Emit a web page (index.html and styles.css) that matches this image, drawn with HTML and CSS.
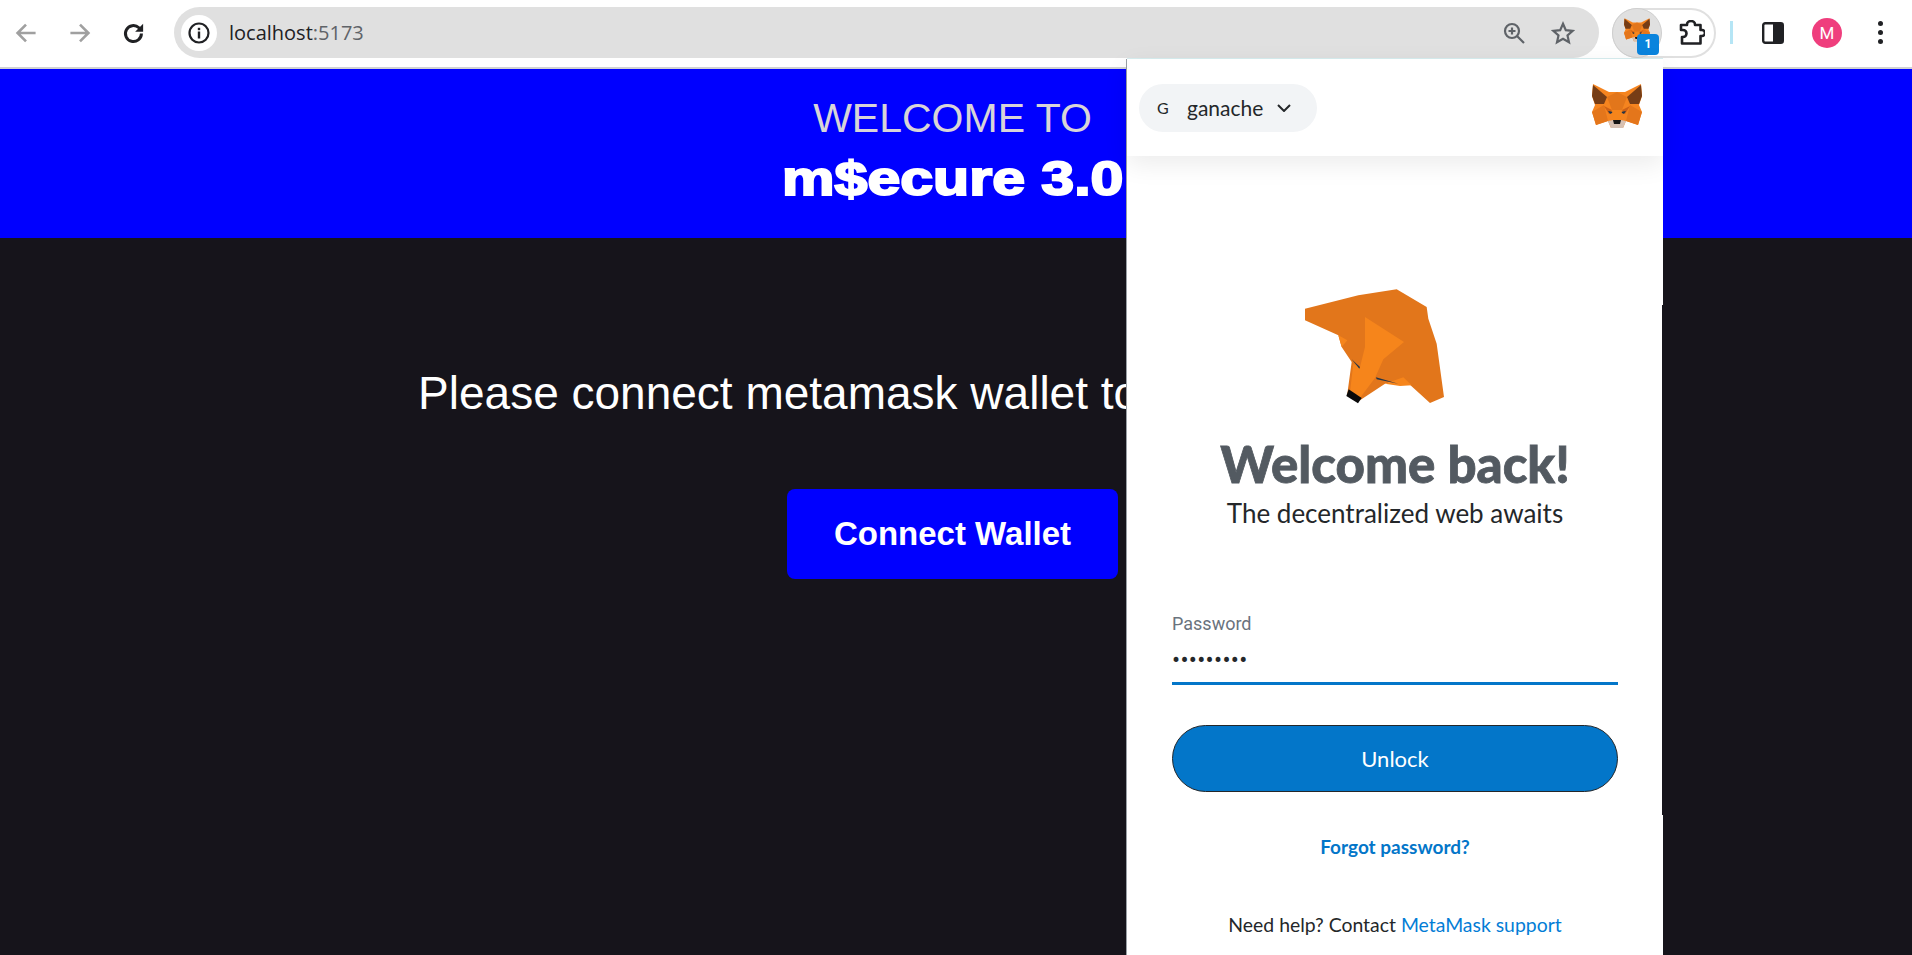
FILE: index.html
```html
<!DOCTYPE html>
<html lang="en">
<head>
<meta charset="utf-8">
<title>m$ecure 3.0</title>
<link rel="stylesheet" href="styles.css">
</head>
<body>
<svg class="defs" width="0" height="0" aria-hidden="true">
  <symbol id="fox" viewBox="0 0 50 45">
    <polygon fill="#f5841f" points="1,0 17,8 33,8 49,0 50,12 47,21 50,28 46,41 34,37 31,44 19,44 16,37 4,41 0,28 3,21 0,12"/>
    <polygon fill="#e2761b" points="15,13 25,8 35,13 30,26 20,26"/>
    <polygon fill="#763d16" points="1,1 15,13 12,20 3,20 0,12"/>
    <polygon fill="#763d16" points="49,1 35,13 38,20 47,20 50,12"/>
    <polygon fill="#e4761b" points="0,28 12,21 16,37 4,41"/>
    <polygon fill="#e4761b" points="50,28 38,21 34,37 46,41"/>
    <polygon fill="#cd6116" points="12,22 20,26 17,30"/>
    <polygon fill="#cd6116" points="38,22 30,26 33,30"/>
    <polygon fill="#233447" points="16,27 22,28 18,30"/>
    <polygon fill="#233447" points="34,27 28,28 32,30"/>
    <polygon fill="#f6851b" points="20,26 30,26 29,36 21,36"/>
    <polygon fill="#d7c1b3" points="16,37 21,36 29,36 34,37 31,44 19,44"/>
    <polygon fill="#161616" points="21,36 29,36 28,40 22,40"/>
  </symbol>
</svg>

<header class="toolbar">
  <svg class="nav-icon" viewBox="0 0 20 20"><path class="stroke-grey" d="M18 10H3M10 3l-7 7 7 7"/></svg>
  <svg class="nav-icon" viewBox="0 0 20 20"><path class="stroke-grey" d="M2 10h15M10 3l7 7-7 7"/></svg>
  <svg class="nav-icon" viewBox="2 1 21 21"><path class="stroke-dark" d="M19 12a7 7 0 1 1-2.2-5.1L19 9"/><path class="fill-dark" d="M20.5 3.5v7h-7z"/></svg>

  <div class="omnibox">
    <span class="info-chip">
      <svg class="info-icon" viewBox="0 0 24 24"><circle cx="12" cy="12" r="9.5" fill="none" stroke="#202124" stroke-width="2.2"/><rect x="10.8" y="10.5" width="2.4" height="7" fill="#202124"/><rect x="10.8" y="6.8" width="2.4" height="2.4" fill="#202124"/></svg>
    </span>
    <span class="url">localhost<span class="url-port">:5173</span></span>
    <svg class="omni-icon zoom-icon" viewBox="0 0 24 24"><circle cx="10" cy="10" r="7" fill="none" stroke="#5f6368" stroke-width="2.2"/><path d="M15 15l7 7M10 6.5v7M6.5 10h7" fill="none" stroke="#5f6368" stroke-width="2.2"/></svg>
    <svg class="omni-icon star-icon" viewBox="0 0 24 24"><path d="M12 2.8l2.8 6.4 6.9.7-5.2 4.6 1.5 6.8-6-3.5-6 3.5 1.5-6.8-5.2-4.6 6.9-.7z" fill="none" stroke="#5f6368" stroke-width="2.2" stroke-linejoin="miter"/></svg>
  </div>

  <div class="ext-group">
    <span class="ext-fox">
      <svg class="ext-fox-icon"><use href="#fox"/></svg>
      <span class="ext-badge">1</span>
    </span>
    <svg class="puzzle" viewBox="0 0 26 25"><path d="M2 5H8V4.500a4 3.500 0 0 1 8 0V5H21.500V10H23a3 3 0 0 1 0 6H21.500V23.500H3V17H4a3.500 3.500 0 0 0 0-7H2Z" fill="none" stroke="#202124" stroke-width="2.600" stroke-linejoin="round"/></svg>
  </div>
  <span class="divider"></span>
  <svg class="panel-icon" viewBox="0 0 22 22"><rect x="1.200" y="1.200" width="19.600" height="19.600" rx="2" fill="none" stroke="#202124" stroke-width="2.400"/><rect x="11" y="1" width="10" height="20" fill="#202124"/></svg>
  <span class="avatar">M</span>
  <span class="menu-dots"><i></i><i></i><i></i></span>
</header>

<main class="page">
  <section class="banner">
    <p class="banner-sub">WELCOME TO</p>
    <h1 class="banner-title">m$ecure 3.0</h1>
  </section>
  <section class="connect">
    <p class="connect-text">Please connect metamask wallet to access the dapp</p>
    <button class="connect-btn">Connect Wallet</button>
  </section>
</main>

<aside class="popup">
  <div class="popup-head">
    <div class="network">
      <span class="network-g">G</span>
      <span class="network-name">ganache</span>
      <svg class="chev" viewBox="0 0 14 8"><path d="M1 1l6 6 6-6" fill="none" stroke="#24272a" stroke-width="2"/></svg>
    </div>
    <svg class="head-fox"><use href="#fox"/></svg>
  </div>
  <div class="popup-body">
    <svg class="big-fox" viewBox="0 0 600 420">
      <polygon fill="#e2761b" points="105,110 265,70 380,52 470,105 475,140 500,215 522,375 480,393 400,320 345,335 270,385 232,365 245,270 215,225 205,190 105,145"/>
      <polygon fill="#f6851b" points="285,135 402,210 340,262 315,318 268,380 240,360 250,275 270,285 285,225"/>
      <polygon fill="#f6851b" points="205,190 232,205 215,225"/>
      <polygon fill="#f6851b" points="400,316 425,340 390,342 345,335"/>
      <polygon fill="#233447" points="245,262 270,285 268,290"/>
      <polygon fill="#233447" points="318,316 385,335 320,322"/>
      <polygon fill="#0a0a0a" points="236,352 275,378 264,394 229,372"/>
    </svg>
    <h2 class="welcome">Welcome back!</h2>
    <p class="tagline">The decentralized web awaits</p>
    <label class="field">
      <span class="field-label">Password</span>
      <span class="field-value">•••••••••</span>
    </label>
    <button class="unlock">Unlock</button>
    <a class="forgot">Forgot password?</a>
    <p class="help">Need help? Contact <a class="help-link">MetaMask support</a></p>
  </div>
  <span class="scroll-thumb"></span>
</aside>
</body>
</html>
```

FILE: styles.css
```css
* { box-sizing: border-box; }
html, body { margin: 0; height: 100%; overflow: hidden; }
body {
  position: relative;
  display: flex;
  flex-direction: column;
  background: #16141b;
  font-family: "Liberation Sans", Arial, sans-serif;
}
.defs { position: absolute; }

/* Browser toolbar */
.toolbar {
  flex: none;
  height: 69px;
  display: flex;
  align-items: center;
  padding: 0 0 2px 0;
  background: #fff;
  border-bottom: 2px solid #cfd1d3;
}
.nav-icon { width: 24px; height: 24px; flex: none; }
.nav-icon:nth-of-type(1) { margin: 0 30px 0 14px; }
.nav-icon:nth-of-type(2) { margin: 0 30px 0 0; }
.nav-icon:nth-of-type(3) { margin: 0 27px 0 0; }
.stroke-grey { fill: none; stroke: #a0a0a0; stroke-width: 2.2; }
.stroke-dark { fill: none; stroke: #202124; stroke-width: 2.6; }
.fill-dark { fill: #202124; }

.omnibox {
  flex: none;
  width: 1425px;
  height: 51px;
  margin-left: 1px;
  display: flex;
  align-items: center;
  padding-left: 7px;
  background: #e0e0e0;
  border-radius: 26px;
}
.info-chip {
  width: 36px;
  height: 36px;
  border-radius: 50%;
  background: #fff;
  display: flex;
  align-items: center;
  justify-content: center;
}
.info-icon { width: 24px; height: 24px; }
.url {
  margin-left: 12px;
  font: 20px "Open Sans", sans-serif;
  color: #202124;
  flex: 1;
}
.url-port { color: #5f6368; }
.omni-icon { width: 24px; height: 24px; flex: none; }
.zoom-icon { margin-right: 25px; }
.star-icon { margin-right: 24px; }

.ext-group {
  flex: none;
  width: 104px;
  height: 50px;
  margin-left: 13px;
  display: flex;
  align-items: center;
  border: 2px solid #e0e0e0;
  border-radius: 25px;
}
.ext-fox {
  position: relative;
  width: 50px;
  height: 50px;
  margin-left: -2px;
  flex: none;
  border-radius: 50%;
  background: #e0e0e0;
  border: 1px solid #cfcfcf;
  display: flex;
  align-items: center;
  justify-content: center;
}
.ext-fox-icon { width: 26px; height: 24px; margin: -5px 0 0 -1px; }
.ext-badge {
  position: absolute;
  left: 24px;
  top: 25px;
  width: 22px;
  height: 21px;
  border-radius: 4px;
  background: #0a84dd;
  color: #fff;
  font: bold 12px/21px Roboto, sans-serif;
  text-align: center;
}
.puzzle { width: 26px; height: 25px; margin-left: 17px; flex: none; }
.divider { width: 3px; height: 23px; margin-left: 14px; background: #b5e5f5; flex: none; }
.panel-icon { width: 22px; height: 22px; margin-left: 29px; flex: none; }
.avatar {
  flex: none;
  width: 30px;
  height: 30px;
  margin-left: 28px;
  border-radius: 50%;
  background: #ef3e7d;
  color: #fff;
  font: 17px/30px Roboto, sans-serif;
  text-align: center;
}
.menu-dots {
  flex: none;
  margin-left: 36px;
  display: flex;
  flex-direction: column;
  gap: 4px;
}
.menu-dots i { width: 5px; height: 5px; border-radius: 50%; background: #202124; display: block; }

/* Page */
.page { flex: 1; display: flex; flex-direction: column; }
.banner {
  flex: none;
  height: 169px;
  background: #00f;
  display: flex;
  flex-direction: column;
  align-items: center;
  padding: 25px 7px 0 0;
}
.banner-sub { margin: 0; font-size: 41px; line-height: 48px; color: #d8d4d8; font-weight: 400; }
.banner-title {
  margin: 9px 0 0;
  font-size: 48px;
  line-height: 56px;
  font-weight: 700;
  color: #fff;
  -webkit-text-stroke: 2px #fff;
  transform: scaleX(1.23);
}
.connect {
  display: flex;
  flex-direction: column;
  align-items: center;
  padding: 128px 7px 0 0;
}
.connect-text { margin: 0; font-size: 46px; line-height: 54px; color: #fff; white-space: nowrap; }
.connect-btn {
  width: 331px;
  height: 90px;
  margin-top: 69px;
  border: 0;
  border-radius: 8px;
  background: #00f;
  color: #fff;
  font: bold 33px "Liberation Sans", Arial, sans-serif;
}

/* MetaMask popup */
.popup {
  position: absolute;
  left: 1127px;
  top: 59px;
  width: 536px;
  height: 896px;
  background: #fff;
  box-shadow: -1px 0 0 #9aa0a6, 0 -1px 0 #d8eef0;
  font-family: Lato, sans-serif;
  color: #24272a;
}
.popup-head {
  height: 97px;
  display: flex;
  align-items: center;
  justify-content: space-between;
  padding: 0 21px 0 12px;
  box-shadow: 0 8px 24px rgba(0, 0, 0, .08);
}
.network {
  width: 178px;
  height: 48px;
  display: flex;
  align-items: center;
  padding-left: 18px;
  border-radius: 24px;
  background: #f2f4f6;
}
.network-g { font-size: 16px; width: 30px; }
.network-name { font-size: 21px; width: 90px; }
.chev { width: 14px; height: 8px; }
.head-fox { width: 50px; height: 45px; margin-top: -2px; }

.popup-body {
  display: flex;
  flex-direction: column;
  align-items: center;
  padding: 0 45px;
}
.big-fox { width: 200px; height: 140px; margin: 116px 50px 0 0; flex: none; }
.welcome { margin: 24px 0 0; font-size: 51px; line-height: 56px; font-weight: 900; color: #535a61; -webkit-text-stroke: .8px #535a61; }
.tagline { margin: 6px 0 0; font-size: 26px; line-height: 30px; color: #24272a; }
.field {
  align-self: stretch;
  display: flex;
  flex-direction: column;
  margin-top: 84px;
  border-bottom: 3px solid #0376c9;
  height: 73px;
}
.field-label { font: 18px/24px Roboto, sans-serif; color: #6a737d; }
.field-value { font: 24px/26px Roboto, sans-serif; letter-spacing: .3px; margin-top: 11px; color: #24272a; }
.unlock {
  align-self: stretch;
  height: 67px;
  margin-top: 40px;
  border: 1px solid #24272a;
  border-radius: 34px;
  background: #0376c9;
  color: #fff;
  font: 22px Lato, sans-serif;
}
.forgot { margin-top: 43px; font-size: 19px; line-height: 24px; font-weight: 700; color: #0376c9; }
.help { margin: 54px 0 0; font-size: 19.400px; line-height: 24px; color: #24272a; white-space: nowrap; }
.help-link { color: #037dd6; }
.scroll-thumb {
  position: absolute;
  right: -1px;
  top: 246px;
  width: 2px;
  height: 510px;
  background: #16141b;
}
```
